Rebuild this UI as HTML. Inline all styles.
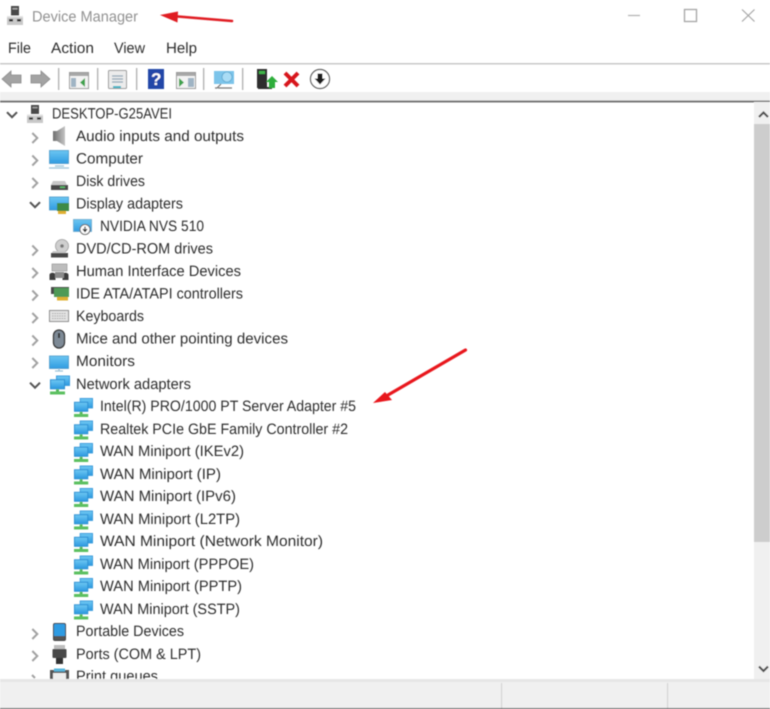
<!DOCTYPE html>
<html>
<head>
<meta charset="utf-8">
<style>
html,body{margin:0;padding:0;background:#fff;width:770px;height:709px;overflow:hidden}
svg{display:block}
text{font-family:"Liberation Sans",sans-serif;font-size:15px;fill:#2e2e2e;text-rendering:geometricPrecision}
</style>
</head>
<body>
<svg width="770" height="709" viewBox="0 0 770 709" xmlns="http://www.w3.org/2000/svg">
<defs>
<filter id="b" x="-5%" y="-5%" width="110%" height="110%"><feGaussianBlur stdDeviation="0.42"/></filter>
<linearGradient id="scr" x1="0" y1="0" x2="0" y2="1"><stop offset="0" stop-color="#6cc6f2"/><stop offset="1" stop-color="#2f9be0"/></linearGradient>
<linearGradient id="spk" x1="0" y1="0" x2="1" y2="0"><stop offset="0" stop-color="#6f6f6f"/><stop offset="1" stop-color="#c4c4c4"/></linearGradient>
<symbol id="pc" viewBox="0 0 16 19" preserveAspectRatio="none" overflow="visible">
<path d="M4 0h8v9.500H4z" fill="#4a4a4a"/><path d="M5.500 2h5v1.500h-5z" fill="#a5a5a5"/>
<path d="M0 10h16v9H0z" fill="#c9c9c9"/><path d="M0 10h16v1.500H0z" fill="#e4e4e4"/>
<path d="M2 13h4v2.500H2zM10 13h4v2.500h-4z" fill="#333"/>
</symbol>
<symbol id="net" viewBox="0 0 20 20" preserveAspectRatio="none" overflow="visible">
<path d="M6 0h14v11H6z" fill="#3a9bdc"/><path d="M7 1h12v9H7z" fill="url(#scr)"/>
<path d="M0 4h15v10.500H0z" fill="#2b8fd2"/><path d="M1 5h13v8.500H1z" fill="url(#scr)"/>
<path d="M6 14.500h3v2.500H6z" fill="#55b85a"/><path d="M0 16.800h15V20H0z" fill="#5cc060"/>
</symbol>
<symbol id="chR" viewBox="0 0 8 12" overflow="visible"><path d="M1.300 1l5 5-5 5" fill="none" stroke="#a2a2a2" stroke-width="2"/></symbol>
<symbol id="chD" viewBox="0 0 12 8" overflow="visible"><path d="M1 1.200l5 5 5-5" fill="none" stroke="#555" stroke-width="2"/></symbol>
</defs>

<g filter="url(#b)">
<!-- chrome -->
<rect x="0" y="63" width="770" height="1.500" fill="#c9c9c9"/>
<rect x="0" y="92" width="770" height="9" fill="#f0f0f0"/>
<rect x="0" y="100.500" width="770" height="2" fill="#757575"/>
<rect x="754" y="102" width="16" height="577" fill="#f0f0f0"/>
<rect x="754" y="124" width="16" height="418" fill="#cdcdcd"/>
<path d="M759 117l4.500-4.500 4.500 4.500" fill="none" stroke="#505050" stroke-width="2.200"/>
<path d="M759 666.500l4.500 4.500 4.500-4.500" fill="none" stroke="#505050" stroke-width="2.200"/>
<rect x="0" y="679" width="770" height="29" fill="#f0f0f0"/>
<rect x="0" y="679" width="770" height="3" fill="#e6e6e6"/>
<rect x="501" y="683" width="1.200" height="25" fill="#d4d4d4"/>
<rect x="667" y="683" width="1.200" height="25" fill="#d4d4d4"/>
<rect x="0" y="708" width="770" height="1" fill="#3a3a3a"/>

<!-- title -->
<use href="#pc" x="7" y="6" width="16" height="19"/>
<text x="32" y="21.500" style="fill:#929292" textLength="106" lengthAdjust="spacingAndGlyphs">Device Manager</text>
<path d="M628 15.500h12" stroke="#b5b5b5" stroke-width="1.300"/>
<rect x="684.500" y="9.500" width="12" height="12" fill="none" stroke="#a5a5a5" stroke-width="1.300"/>
<path d="M742 9.500l12.500 12M754.500 9.500l-12.500 12" stroke="#a5a5a5" stroke-width="1.200"/>
<path d="M172 16l60 5" stroke="#e01b22" stroke-width="2.600" stroke-linecap="round" fill="none"/>
<path d="M160 15l18-3.500-.5 11z" fill="#e01b22"/>

<!-- menu -->
<text x="8" y="53" textLength="23" lengthAdjust="spacingAndGlyphs">File</text>
<text x="51" y="53" textLength="43" lengthAdjust="spacingAndGlyphs">Action</text>
<text x="114" y="53" textLength="31" lengthAdjust="spacingAndGlyphs">View</text>
<text x="166" y="53" textLength="31" lengthAdjust="spacingAndGlyphs">Help</text>

<!-- toolbar -->
<path d="M2 79l9-8v4h10v8H11v4z" fill="#a3a3a3" stroke="#8a8a8a" stroke-width=".8"/>
<path d="M50 79l-9-8v4H31v8h10v4z" fill="#a3a3a3" stroke="#8a8a8a" stroke-width=".8"/>
<rect x="58" y="68" width="1.300" height="22" fill="#b0b0b0"/>
<rect x="97" y="68" width="1.300" height="22" fill="#b0b0b0"/>
<rect x="136" y="68" width="1.300" height="22" fill="#b0b0b0"/>
<rect x="203" y="68" width="1.300" height="22" fill="#b0b0b0"/>
<rect x="242" y="68" width="1.300" height="22" fill="#b0b0b0"/>
<rect x="69.500" y="72.500" width="19" height="16" fill="#f3f3f3" stroke="#9a9a9a"/>
<rect x="70" y="73" width="18" height="3" fill="#a8a8a8"/>
<rect x="71" y="78" width="5" height="9" fill="#9fb4c4"/>
<path d="M85 78v9l-5-4.500z" fill="#3fa34d"/>
<rect x="108.500" y="70.500" width="18" height="18" rx="1" fill="#ececec" stroke="#9a9a9a"/>
<path d="M112 76h11M112 79h11M112 82h11" stroke="#8fa5b5" stroke-width="1.200"/>
<rect x="113" y="86" width="8" height="2" fill="#3fb6c6"/>
<rect x="148" y="69" width="16" height="20" fill="#2447a8"/>
<text x="151" y="85" style="fill:#fff;font-weight:bold;font-size:17px">?</text>
<rect x="176.500" y="72.500" width="19" height="16" fill="#f3f3f3" stroke="#9a9a9a"/>
<rect x="177" y="73" width="18" height="3" fill="#a8a8a8"/>
<path d="M179 78v9l5-4.500z" fill="#3fa34d"/>
<rect x="188" y="78" width="6" height="9" fill="#9fb4c4"/>
<rect x="214" y="71" width="20" height="13" fill="#7cc4ea"/>
<circle cx="227" cy="77" r="5" fill="#a9dcf5" stroke="#5da7cf" stroke-width=".8"/>
<path d="M221 84l-4 4h-2M218 88h14" stroke="#777" stroke-width="1.200" fill="none"/>
<rect x="257" y="69" width="10" height="19" fill="#2d2d2d"/>
<rect x="259" y="71" width="6" height="3" fill="#3fb54a"/>
<path d="M258 88h14" stroke="#2d2d2d" stroke-width="2"/>
<path d="M266 82l6-6 6 6h-3v6h-6v-6z" fill="#2fae3b"/>
<path d="M285 73l13 13M298 73l-13 13" stroke="#d8161e" stroke-width="4"/>
<circle cx="320" cy="79" r="9.500" fill="#fff" stroke="#555" stroke-width="1.200"/>
<path d="M317.500 73.500h5v5h3l-5.500 6-5.500-6h3z" fill="#1e1e1e"/>

<!-- tree icons & chevrons -->
<use href="#chD" x="6" y="111" width="12" height="8"/>
<use href="#pc" x="27" y="105" width="16" height="18"/>
<text x="52" y="118.500" textLength="120" lengthAdjust="spacingAndGlyphs">DESKTOP-G25AVEI</text>

<g id="rows">
<use href="#chR" x="31" y="132" width="8" height="12"/>
<path d="M53 131h4v10h-4zM57 131l8-5v20l-8-5z" fill="url(#spk)"/>
<text x="76" y="141" textLength="168" lengthAdjust="spacingAndGlyphs">Audio inputs and outputs</text>

<use href="#chR" x="31" y="154.500" width="8" height="12"/>
<rect x="49.500" y="150.500" width="19" height="13" fill="url(#scr)" stroke="#4a98c8" stroke-width=".8"/>
<path d="M55 166h9M49 168h20" stroke="#9cc3d8" stroke-width="1.300"/>
<text x="76" y="163.500" textLength="67" lengthAdjust="spacingAndGlyphs">Computer</text>

<use href="#chR" x="31" y="177" width="8" height="12"/>
<path d="M53 181h12l2 4H51z" fill="#c8c8c8"/><rect x="51" y="185" width="17" height="5" fill="#4a4a4a"/>
<rect x="60" y="186.500" width="5" height="1.500" fill="#59c06a"/>
<text x="76" y="186" textLength="69" lengthAdjust="spacingAndGlyphs">Disk drives</text>

<use href="#chD" x="29" y="201" width="12" height="8"/>
<rect x="49.500" y="197" width="19" height="13" fill="url(#scr)" stroke="#4a98c8" stroke-width=".8"/>
<rect x="57" y="203" width="12" height="8" fill="#3d8a45"/><rect x="58" y="211" width="8" height="3" fill="#e0b030"/>
<text x="76" y="208.500" textLength="107" lengthAdjust="spacingAndGlyphs">Display adapters</text>

<rect x="73.500" y="219.500" width="18" height="12" fill="url(#scr)" stroke="#6aa8cc" stroke-width=".8"/>
<circle cx="85" cy="229.500" r="5" fill="#fff" stroke="#666" stroke-width="1"/>
<path d="M85 226.500v4M83 229l2 2.500 2-2.500" stroke="#222" stroke-width="1.200" fill="none"/>
<text x="100" y="231" textLength="104" lengthAdjust="spacingAndGlyphs">NVIDIA NVS 510</text>

<use href="#chR" x="31" y="244.500" width="8" height="12"/>
<circle cx="62" cy="246" r="6.500" fill="#cfcfcf" stroke="#999" stroke-width=".8"/><circle cx="62" cy="246" r="1.800" fill="#777"/>
<path d="M53 251h12l2 3H51z" fill="#c8c8c8"/><rect x="51" y="253" width="17" height="4.500" fill="#4a4a4a"/>
<text x="76" y="253.500" textLength="137" lengthAdjust="spacingAndGlyphs">DVD/CD-ROM drives</text>

<use href="#chR" x="31" y="267" width="8" height="12"/>
<rect x="52" y="264" width="15" height="7" fill="#bdbdbd" stroke="#888" stroke-width=".6"/>
<path d="M49.500 280v-5c0-3 6-3 6 0v5zM62.500 280v-5c0-3 6-3 6 0v5z" fill="#3c3c3c"/>
<rect x="55" y="272" width="9" height="6" fill="#8b8b8b"/>
<text x="76" y="276" textLength="165" lengthAdjust="spacingAndGlyphs">Human Interface Devices</text>

<use href="#chR" x="31" y="289.500" width="8" height="12"/>
<rect x="51" y="287" width="18" height="7" fill="#4a4a4a"/><rect x="54" y="288" width="15" height="9" fill="#4f9a56"/>
<rect x="57" y="297" width="11" height="3.500" fill="#e0b030"/>
<text x="76" y="298.500" textLength="167" lengthAdjust="spacingAndGlyphs">IDE ATA/ATAPI controllers</text>

<use href="#chR" x="31" y="312" width="8" height="12"/>
<rect x="49.500" y="310.500" width="19" height="11" fill="#e4e4e4" stroke="#8a8a8a"/>
<path d="M52 313.500h14M52 316h14M52 318.500h14" stroke="#aaa" stroke-width="1.100" stroke-dasharray="1.600 .8"/>
<text x="76" y="321" textLength="68" lengthAdjust="spacingAndGlyphs">Keyboards</text>

<use href="#chR" x="31" y="334.500" width="8" height="12"/>
<rect x="53.500" y="330" width="11" height="18" rx="5.500" fill="#7e8a96" stroke="#333" stroke-width="1.300"/>
<rect x="58" y="333" width="2" height="5" fill="#333"/>
<text x="76" y="343.500" textLength="212" lengthAdjust="spacingAndGlyphs">Mice and other pointing devices</text>

<use href="#chR" x="31" y="357" width="8" height="12"/>
<rect x="49.500" y="356" width="19" height="12.500" fill="url(#scr)" stroke="#4a98c8" stroke-width=".8"/>
<path d="M59 368.500v2M55 371h8" stroke="#9cc3d8" stroke-width="1.300"/>
<text x="76" y="366" textLength="59" lengthAdjust="spacingAndGlyphs">Monitors</text>

<use href="#chD" x="29" y="381.500" width="12" height="8"/>
<use href="#net" x="50" y="375.500" width="20" height="19"/>
<text x="76" y="389" textLength="115" lengthAdjust="spacingAndGlyphs">Network adapters</text>

<use href="#net" x="74" y="398" width="19" height="19"/>
<text x="100" y="411" textLength="256" lengthAdjust="spacingAndGlyphs">Intel(R) PRO/1000 PT Server Adapter #5</text>
<use href="#net" x="74" y="420.500" width="19" height="19"/>
<text x="100" y="434" textLength="248" lengthAdjust="spacingAndGlyphs">Realtek PCIe GbE Family Controller #2</text>
<use href="#net" x="74" y="443" width="19" height="19"/>
<text x="100" y="456" textLength="144" lengthAdjust="spacingAndGlyphs">WAN Miniport (IKEv2)</text>
<use href="#net" x="74" y="465.500" width="19" height="19"/>
<text x="100" y="479" textLength="121" lengthAdjust="spacingAndGlyphs">WAN Miniport (IP)</text>
<use href="#net" x="74" y="488" width="19" height="19"/>
<text x="100" y="501" textLength="136" lengthAdjust="spacingAndGlyphs">WAN Miniport (IPv6)</text>
<use href="#net" x="74" y="510.500" width="19" height="19"/>
<text x="100" y="524" textLength="140" lengthAdjust="spacingAndGlyphs">WAN Miniport (L2TP)</text>
<use href="#net" x="74" y="533" width="19" height="19"/>
<text x="100" y="546" textLength="223" lengthAdjust="spacingAndGlyphs">WAN Miniport (Network Monitor)</text>
<use href="#net" x="74" y="555.500" width="19" height="19"/>
<text x="100" y="569" textLength="154" lengthAdjust="spacingAndGlyphs">WAN Miniport (PPPOE)</text>
<use href="#net" x="74" y="578" width="19" height="19"/>
<text x="100" y="591" textLength="142" lengthAdjust="spacingAndGlyphs">WAN Miniport (PPTP)</text>
<use href="#net" x="74" y="600.500" width="19" height="19"/>
<text x="100" y="614" textLength="140" lengthAdjust="spacingAndGlyphs">WAN Miniport (SSTP)</text>

<use href="#chR" x="31" y="628" width="8" height="12"/>
<rect x="53.500" y="623.500" width="12" height="17" rx="1.500" fill="#2d9be2" stroke="#444" stroke-width="1"/>
<rect x="54" y="636" width="11" height="4" fill="#555"/>
<text x="76" y="636" textLength="108" lengthAdjust="spacingAndGlyphs">Portable Devices</text>

<use href="#chR" x="31" y="650" width="8" height="12"/>
<rect x="54" y="645" width="11" height="4" fill="#bdbdbd"/>
<rect x="52.500" y="649" width="14" height="9" rx="1" fill="#4a4a4a"/>
<rect x="56" y="658" width="7" height="6" fill="#333"/>
<text x="76" y="659" textLength="125" lengthAdjust="spacingAndGlyphs">Ports (COM &amp; LPT)</text>

<rect x="50" y="670" width="19" height="9" fill="#555"/><rect x="54" y="668.500" width="11" height="3" fill="#54b5dc"/>
<rect x="53" y="673" width="13" height="6" fill="#eee"/>
<path d="M32 675l3 3" stroke="#a2a2a2" stroke-width="2"/>
<svg x="0" y="660" width="754" height="19" viewBox="0 660 754 19"><text x="76" y="681" textLength="82" lengthAdjust="spacingAndGlyphs">Print queues</text></svg>
</g>

<!-- second arrow -->
<path d="M465.500 350L388 395" stroke="#e8141c" stroke-width="3.200" stroke-linecap="round" fill="none"/>
<path d="M373 403l12-11 7 8z" fill="#e8141c"/>
</g>
</svg>
</body>
</html>
